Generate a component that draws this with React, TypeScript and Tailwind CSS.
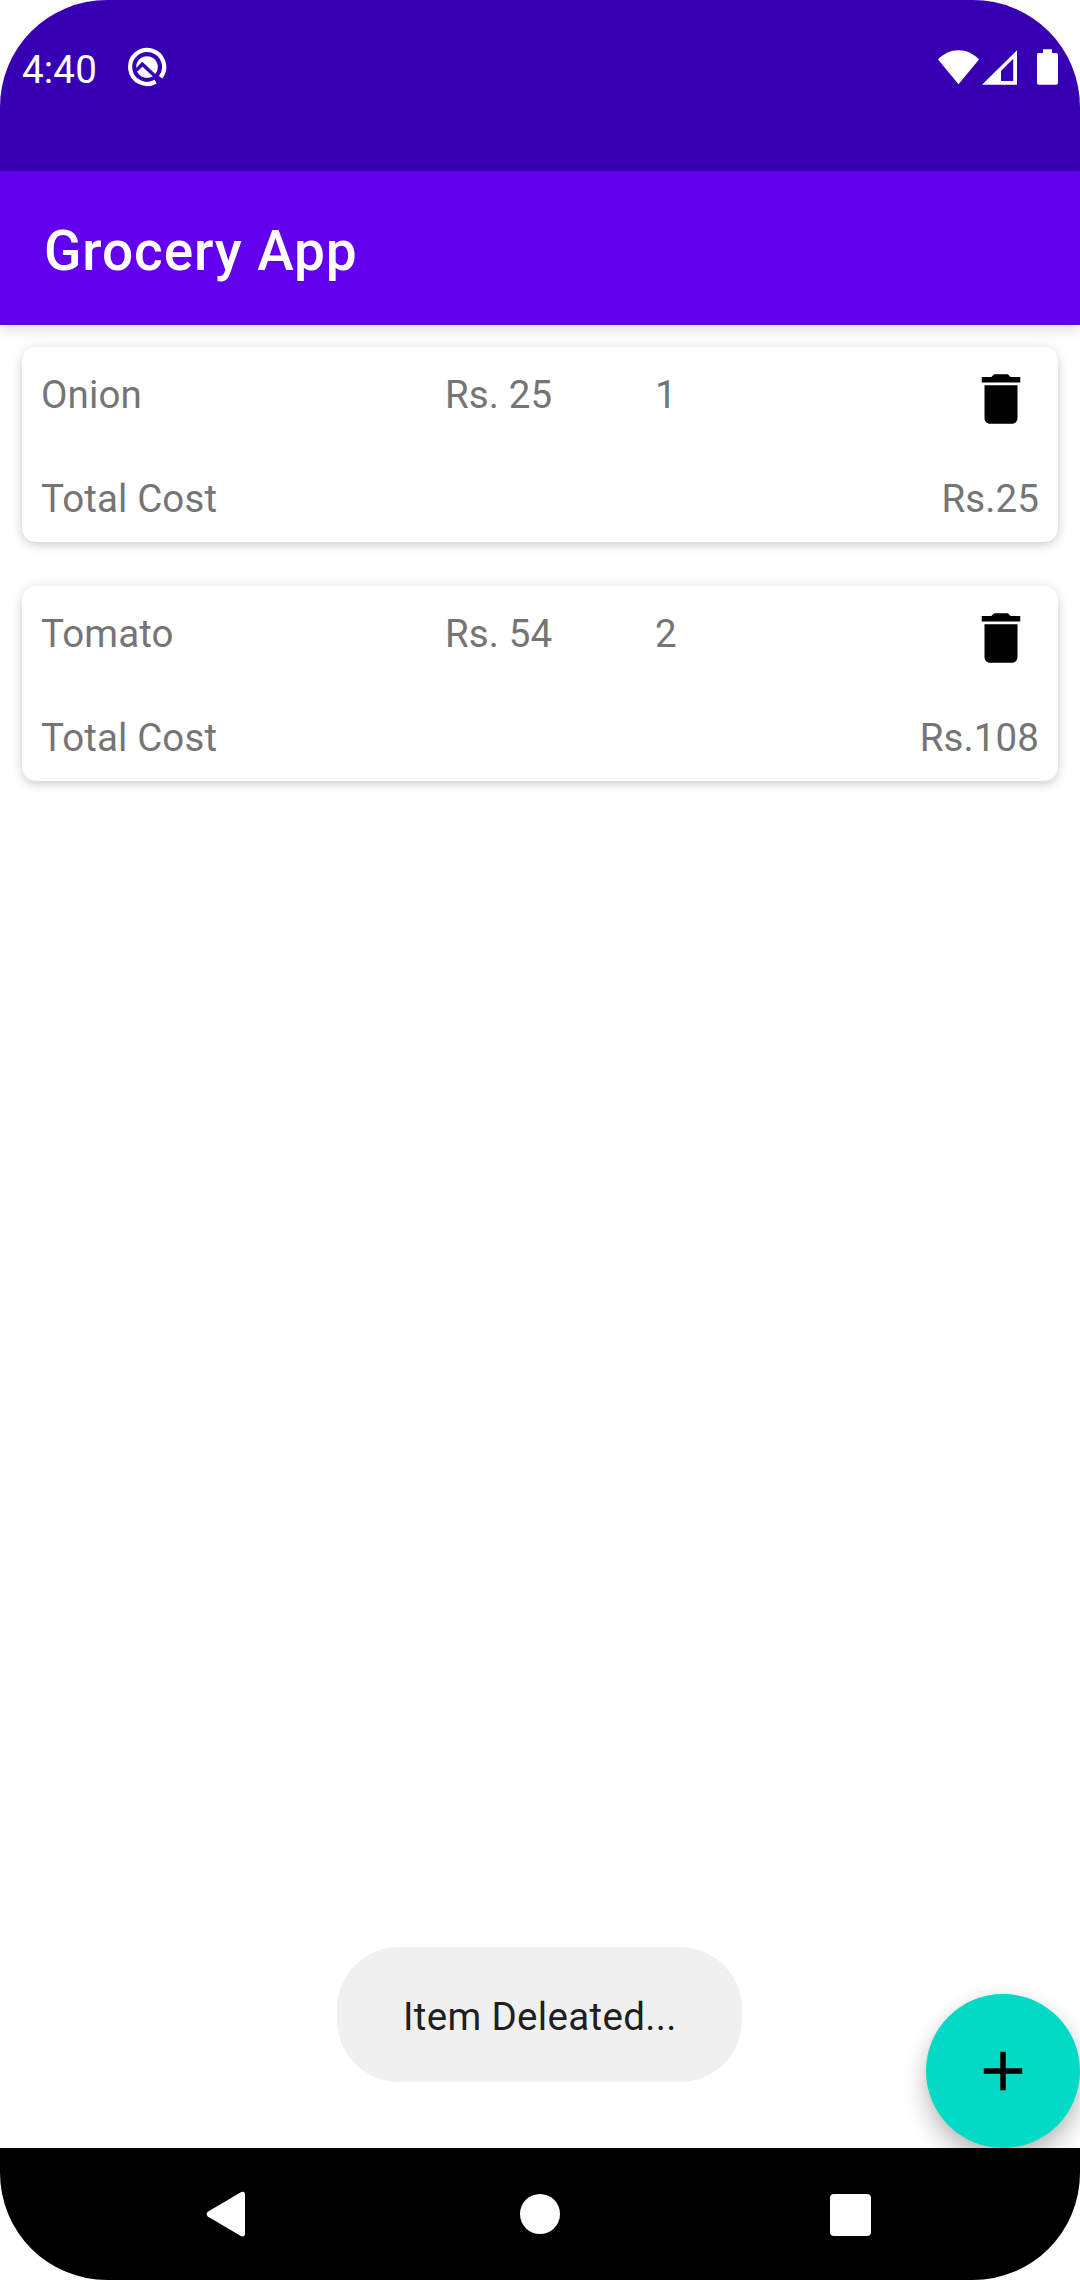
const items = [
  { name: "Onion", rate: 25, quantity: 1 },
  { name: "Tomato", rate: 54, quantity: 2 },
];

type Item = (typeof items)[number];

function DebugIcon() {
  return (
    <svg className="h-[40px] w-[40px]" viewBox="0 0 40 40" fill="none">
      <path d="M28.7 34.6A17 17 0 1 1 33.6 30.3" stroke="#fff" strokeWidth="4.2" />
      <circle cx="20" cy="20" r="10.8" fill="#fff" />
      <path d="M9.300 23.200 15.300 17.200 33 33.800" stroke="#3700b3" strokeWidth="3.4" />
    </svg>
  );
}

function StatusBar() {
  return (
    <div className="flex h-[171px] items-start justify-between bg-[#3700b3] pl-[22px] pr-[22px]">
      <div className="flex items-start">
        <span className="mt-[44px] w-[75px] text-[38.5px] leading-[52px] tracking-[0.2px] text-white">4:40</span>
        <div className="ml-[29.5px] mt-[47px]">
          <DebugIcon />
        </div>
      </div>
      <div className="mt-[49px] flex items-start">
        <svg className="h-[36px] w-[41px]" viewBox="0 0 41 36" fill="#fff">
          <path d="M20.5 35.3 0 10.4C5.8 4.4 12.8 1.2 20.5 1.2S35.2 4.4 41 10.4Z" />
        </svg>
        <svg className="ml-[3px] h-[36px] w-[35px]" viewBox="0 0 35 36" fill="#fff" fillRule="evenodd">
          <path d="M0 35.8 35 1.3V35.8ZM19 22V32H31.2V9.8Z" />
        </svg>
        <svg className="ml-[20px] h-[36px] w-[21px]" viewBox="0 0 21 36" fill="#fff">
          <path d="M6 0.2H15V4H19.2Q21 4 21 5.8V33.9Q21 35.7 19.2 35.7H1.8Q0 35.7 0 33.9V5.8Q0 4 1.8 4H6Z" />
        </svg>
      </div>
    </div>
  );
}

function ItemCard({ item }: { item: Item }) {
  return (
    <article className="flex h-[195px] flex-col rounded-[14px] bg-white px-[19px] pt-[22px] shadow-[0_4px_10px_rgba(0,0,0,0.13),0_0_14px_rgba(0,0,0,0.08)]">
      <div className="grid h-[104px] grid-cols-[404px_210px_1fr_auto] items-start">
        <span>{item.name}</span>
        <span>Rs. {item.rate}</span>
        <span>{item.quantity}</span>
        <button aria-label={"Delete " + item.name} className="-mt-[3.25px] mr-[5px] h-[66px] w-[66px]">
          <svg viewBox="0 0 24 24" className="h-full w-full" fill="#000">
            <path d="M6 19c0 1.1.9 2 2 2h8c1.1 0 2-.9 2-2V7H6v12zM19 4h-3.5l-1-1h-5l-1 1H5v2h14V4z" />
          </svg>
        </button>
      </div>
      <div className="flex justify-between">
        <span>Total Cost</span>
        <span>Rs.{item.rate * item.quantity}</span>
      </div>
    </article>
  );
}

function NavigationBar() {
  return (
    <nav className="relative z-10 flex h-[132px] items-start bg-black pl-[206px] pt-[43px]">
      <svg className="h-[47px] w-[40px]" viewBox="0 0 40 47" fill="#fff">
        <path d="M1.8 20.7 34.4 1.4Q39-.6 39 4V42.2Q39 46.8 34.4 44.8L1.8 25.5Q-.6 23.1 1.8 20.7Z" />
      </svg>
      <span className="ml-[274px] mt-[3px] h-[40px] w-[40px] rounded-full bg-white" />
      <span className="ml-[270px] mt-[3px] h-[41.5px] w-[41px] rounded-[4px] bg-white" />
    </nav>
  );
}

export default function App() {
  return (
    <div className="h-[2280px] w-[1080px] bg-white font-['Roboto',sans-serif]">
      <div className="flex h-full flex-col overflow-hidden rounded-[107px] bg-white">
        <StatusBar />
        <header className="flex h-[154px] items-center bg-[#6200ee] pl-[44px] pt-[5px] shadow-[0_4px_14px_rgba(0,0,0,0.15)]">
          <h1 className="text-[55px] font-medium leading-[64px] tracking-[0.88px] text-white">Grocery App</h1>
        </header>
        <main className="relative flex flex-1 flex-col gap-[44px] px-[22px] pt-[22px] text-[38.5px] leading-[52px] tracking-[0.11px] text-[#757575]">
          {items.map((item) => (
            <ItemCard key={item.name} item={item} />
          ))}
          <div
            role="status"
            className="absolute bottom-[66px] left-[337px] flex h-[135px] w-[405px] items-center rounded-[62px] bg-[#f0f0f0] pl-[66px] pt-[4px] tracking-[0.33px] text-[#1f1f1f]"
          >
            Item Deleated...
          </div>
          <button
            aria-label="Add item"
            className="absolute bottom-0 right-0 flex h-[154px] w-[154px] items-center justify-center rounded-full bg-[#03dac5] shadow-[0_14px_26px_rgba(0,0,0,0.24),0_2px_16px_rgba(0,0,0,0.06)]"
          >
            <svg className="h-[66px] w-[66px]" viewBox="0 0 24 24" fill="#000">
              <path d="M19 13h-6v6h-2v-6H5v-2h6V5h2v6h6v2z" />
            </svg>
          </button>
        </main>
        <NavigationBar />
      </div>
    </div>
  );
}
